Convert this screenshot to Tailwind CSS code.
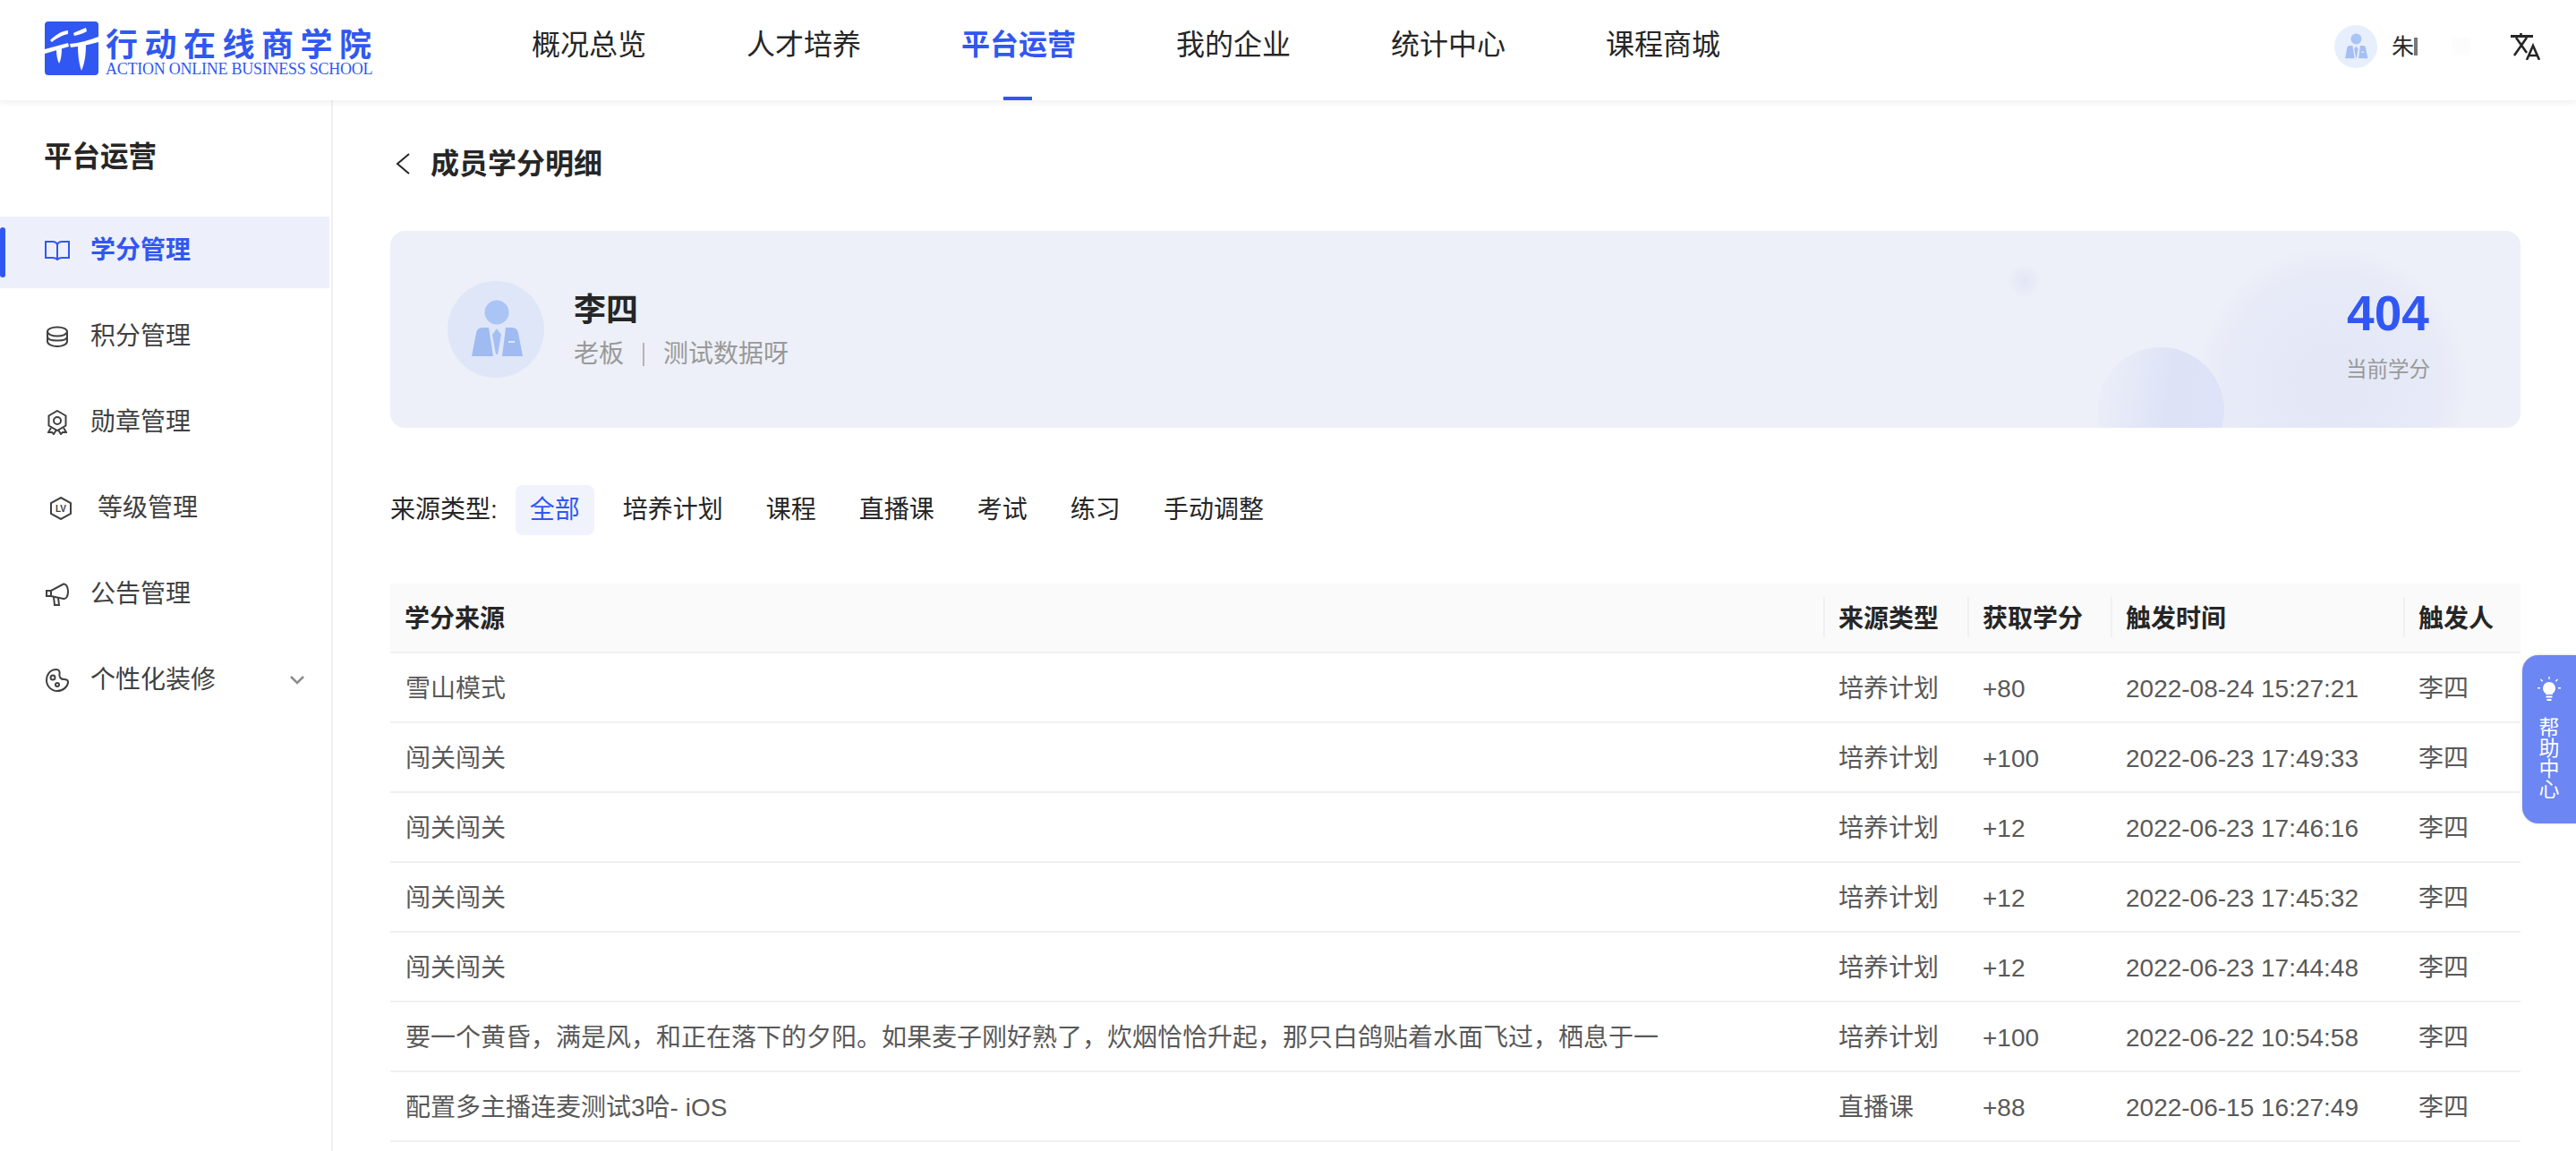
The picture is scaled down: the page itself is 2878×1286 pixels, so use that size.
<!DOCTYPE html>
<html lang="zh-CN">
<head>
<meta charset="UTF-8">
<title>成员学分明细</title>
<script src="https://cdn.jsdelivr.net/npm/@tailwindcss/browser@4"></script>
</head>
<body class="h-[1286px] overflow-hidden bg-white text-[#262626] [font-family:'Liberation_Sans','Noto_Sans_CJK_SC',sans-serif]">

<!-- header -->
<header class="relative z-10 flex h-[112px] items-center bg-white shadow-[0_2px_8px_rgba(0,0,0,0.07)]">
  <div class="mb-[4px] ml-[50px] flex w-[366px] shrink-0 items-center">
    <svg class="h-[60px] w-[60px] shrink-0" viewBox="0 0 60 60">
      <rect width="60" height="60" rx="4" fill="#3157f2"/>
      <path d="M6 21 C12 15 18 11 26 10 L26 14 C20 15 13 19 8 23 Z" fill="#fff"/>
      <path d="M0 31 L26 24 L27 28 L0 36 Z" fill="#fff"/>
      <path d="M13 32 L19 30 C19 37 18 43 16 47 C14 43 13 37 13 32 Z" fill="#fff"/>
      <path d="M32 13 C36 11 41 9 46 7 L47 11 C42 14 37 15 33 16 Z" fill="#fff"/>
      <path d="M28 25 C38 24 50 21 60 17 L60 23 C50 26 38 28 29 29 Z" fill="#fff"/>
      <path d="M37 27 L46 25 C46 35 45 46 41 55 C38 47 37 36 37 27 Z" fill="#fff"/>
    </svg>
    <div class="ml-[8px] flex flex-col pt-[8px]">
      <span class="h-[38px] whitespace-nowrap text-[36px] leading-[40px] font-bold tracking-[7.5px] text-[#3157f2]">行动在线商学院</span>
      <span class="whitespace-nowrap text-[18px] leading-[16px] tracking-[-0.25px] text-[#3157f2] [font-family:'Liberation_Serif',serif]">ACTION ONLINE BUSINESS SCHOOL</span>
    </div>
  </div>
  <nav class="ml-[178px] flex h-full items-center gap-[113px] pb-[12px] text-[32px] leading-[40px]">
    <a class="w-[127px] whitespace-nowrap">概况总览</a>
    <a class="w-[127px] whitespace-nowrap">人才培养</a>
    <a class="relative flex h-full w-[127px] items-center whitespace-nowrap font-semibold text-[#3157f2]">平台运营<span class="absolute bottom-[-12px] left-[47px] h-[4px] w-[32px] bg-[#3157f2]"></span></a>
    <a class="w-[127px] whitespace-nowrap">我的企业</a>
    <a class="w-[127px] whitespace-nowrap">统计中心</a>
    <a class="w-[127px] whitespace-nowrap">课程商城</a>
  </nav>
  <div class="ml-auto flex items-center pr-[40px] pb-[8px]">
    <svg class="h-[48px] w-[48px]" viewBox="0 0 108 108">
      <circle cx="54" cy="54" r="54" fill="#e8effc"/>
      <circle cx="55" cy="35" r="13.5" fill="#a9c4f5"/>
      <path d="M27 84 L32 58 Q33 52 39 52 L46 52 L51 84 Z M61 84 L65 52 L72 52 Q78 52 79 58 L84 84 Z" fill="#a5bff4"/>
      <path d="M55 53 L60 60 L56 82 L54 82 L50 60 Z" fill="#a5bff4"/>
      <rect x="68" y="67" width="7" height="2" fill="#fff"/>
    </svg>
    <span class="ml-[16px] text-[25px] leading-[32px]">朱</span>
    <span class="h-[20px] w-[4px] bg-[#777]"></span>
    <span class="ml-[39px] h-[20px] w-[20px] bg-[#fcfcfc]"></span>
    <svg class="ml-[45px] h-[30px] w-[33px]" viewBox="0 0 33 30" fill="none" stroke="#262626">
      <path stroke-width="3" d="M0 3.5H25"/>
      <path stroke-width="2.6" d="M11.5 0V3M6 5L18 22M18 5L4 25"/>
      <path stroke-width="2.6" d="M18 30L25 14L32 30M20 25H30"/>
    </svg>
  </div>
</header>

<div class="flex h-[1174px]">
  <!-- sidebar -->
  <aside class="w-[372px] shrink-0 border-r-2 border-[#f0f0f0]">
    <h2 class="mt-[43px] mb-[47px] pl-[49px] text-[31.5px] leading-[40px] font-semibold">平台运营</h2>
    <ul class="flex flex-col gap-[16px] text-[28px] leading-[36px] text-[#404040]">
      <li class="relative mr-[2px] flex h-[80px] items-center gap-[23px] bg-[#edf0fb] pb-1 pl-[50px] font-semibold text-[#3157f2]">
        <span class="absolute top-[12px] left-0 h-[56px] w-[6px] rounded-[3px] bg-[#3157f2]"></span>
        <svg class="h-[22px] w-[28px]" viewBox="0 0 28 22" fill="none" stroke="#3157f2" stroke-width="2"><path d="M14 4C13 2 11 1 9 1H1V19H9C11 19 13 20 14 21C15 20 17 19 19 19H27V1H19C17 1 15 2 14 4V21"/></svg>
        <span>学分管理</span>
      </li>
      <li class="flex h-[80px] items-center gap-[25px] pb-1 pl-[52px]">
        <svg class="h-[24px] w-[24px]" viewBox="0 0 24 24" fill="none" stroke="#404040" stroke-width="2"><ellipse cx="12" cy="6.5" rx="11" ry="5"/><path d="M1 6.5V12C1 15 6 16.5 12 16.5S23 15 23 12V6.5M1 12V17.5C1 20.5 6 23 12 23S23 20.5 23 17.5V12"/></svg>
        <span>积分管理</span>
      </li>
      <li class="flex h-[80px] items-center gap-[26px] pb-1 pl-[53px]">
        <svg class="h-[28px] w-[22px]" viewBox="0 0 22 28" fill="none" stroke="#404040" stroke-width="2"><path d="M11 1L20.5 6.5V17.5L11 23L1.5 17.5V6.5Z"/><circle cx="11" cy="12" r="4"/><path d="M4 20L1 25L5 25L7 27L9.5 23M18 20L21 25L17 25L15 27L12.5 23"/></svg>
        <span>勋章管理</span>
      </li>
      <li class="flex h-[80px] items-center gap-[29px] pb-1 pl-[56px]">
        <svg class="h-[26px] w-[24px]" viewBox="0 0 24 26" fill="none" stroke="#404040" stroke-width="2"><path d="M12 1L23 7V19L12 25L1 19V7Z"/><text x="12" y="17" text-anchor="middle" font-size="10" font-weight="700" fill="#404040" stroke="none" font-family="Liberation Sans">LV</text></svg>
        <span>等级管理</span>
      </li>
      <li class="flex h-[80px] items-center gap-[24px] pb-1 pl-[51px]">
        <svg class="h-[26px] w-[26px]" viewBox="0 0 26 26" fill="none" stroke="#404040" stroke-width="2"><path d="M1 9H6L20 1.5C23 1 25 5 25 10C25 15 23 18.5 20 18L6 15H1Z"/><path d="M6 9V15M9 16L10 25H15L14 17"/></svg>
        <span>公告管理</span>
      </li>
      <li class="flex h-[80px] items-center pb-1 pl-[51px]">
        <svg class="h-[26px] w-[26px]" viewBox="0 0 26 26" fill="none" stroke="#404040" stroke-width="2"><path d="M12 1C5 1 1 6.500 1 13C1 20 6.500 25 13 25C19.500 25 25 20 25 15C25 13 23 12 20.500 12C17 12 15 10 15.500 6C16 3 14.500 1 12 1Z"/><circle cx="8" cy="10" r="2.500"/><circle cx="13" cy="18" r="2"/></svg>
        <span class="ml-[24px] flex-1">个性化装修</span>
        <svg class="mr-[30px] h-[10px] w-[16px]" viewBox="0 0 16 10" fill="none" stroke="#8c8c8c" stroke-width="2.5"><path d="M1 1L8 8L15 1"/></svg>
      </li>
    </ul>
  </aside>

  <!-- main content -->
  <main class="min-w-0 flex-1 pr-[62px] pl-[64px]">
    <div class="mt-[51px] mb-[55px] flex h-[40px] items-center">
      <svg class="ml-[5px] h-[24px] w-[18px]" viewBox="0 0 18 24" fill="none" stroke="#262626" stroke-width="2"><path d="M16 1L3 12L16 23"/></svg>
      <h1 class="ml-[22px] text-[32px] leading-[40px] font-semibold">成员学分明细</h1>
    </div>

    <!-- member card -->
    <section class="relative flex h-[220px] items-center overflow-hidden rounded-[16px] bg-[#edf0f8]">
      <span class="absolute top-[37px] left-[1807px] h-[38px] w-[38px] rounded-full bg-[radial-gradient(closest-side,#e3e6f6,transparent)]"></span>
      <span class="absolute top-[15px] left-[2016px] h-[308px] w-[308px] rounded-full bg-[radial-gradient(closest-side,#e3e7f6,#e7eaf7_75%,transparent)]"></span>
      <span class="absolute top-[130px] left-[1907px] h-[142px] w-[142px] rounded-full bg-[linear-gradient(100deg,transparent,#dde2f7_55%,#dde3f8)]"></span>

      <svg class="relative ml-[64px] h-[108px] w-[108px] shrink-0" viewBox="0 0 108 108">
        <circle cx="54" cy="54" r="54" fill="#dfe6f8"/>
        <circle cx="55" cy="35" r="13.5" fill="#a9c4f5"/>
        <path d="M27 84 L32 58 Q33 52 39 52 L46 52 L51 84 Z M61 84 L65 52 L72 52 Q78 52 79 58 L84 84 Z" fill="#a0baf2"/>
        <path d="M55 53 L60 60 L56 82 L54 82 L50 60 Z" fill="#a5bff4"/>
        <rect x="68" y="67" width="7" height="2" fill="#dfe6f8"/>
      </svg>
      <div class="relative ml-[33px] pt-[3px]">
        <div class="text-[36px] leading-[44px] font-bold">李四</div>
        <div class="mt-[9px] flex items-center text-[28px] leading-[36px] text-[#999]">
          <span>老板</span>
          <span class="mx-[21px] h-[26px] w-[2px] bg-[#b5b5b5]"></span>
          <span>测试数据呀</span>
        </div>
      </div>
      <div class="relative mr-[101px] ml-auto flex flex-col items-center pt-[11px]">
        <span class="text-[55px] leading-[60px] font-bold text-[#3157f2]">404</span>
        <span class="mt-[18px] text-[23.5px] leading-[30px] text-[#999]">当前学分</span>
      </div>
    </section>

    <!-- source type filter -->
    <div class="mt-[64px] flex items-center gap-[16px] text-[28px] leading-[36px]">
      <span class="mr-[4px] whitespace-nowrap">来源类型:</span>
      <span class="flex h-[56px] items-center rounded-[8px] bg-[#f0f3fc] px-[16px] text-[#3157f2]">全部</span>
      <span class="px-[16px]">培养计划</span>
      <span class="px-[16px]">课程</span>
      <span class="px-[16px]">直播课</span>
      <span class="px-[16px]">考试</span>
      <span class="px-[16px]">练习</span>
      <span class="px-[16px]">手动调整</span>
    </div>

    <!-- credit table -->
    <table class="mt-[54px] w-full table-fixed border-separate border-spacing-0 text-left text-[28px] leading-[36px]">
      <colgroup>
        <col>
        <col class="w-[161px]">
        <col class="w-[160px]">
        <col class="w-[327px]">
        <col class="w-[131px]">
      </colgroup>
      <thead>
        <tr class="h-[78px] bg-[#fafafa] font-semibold">
          <th class="border-b-2 border-[#f0f0f0] px-[16px] pt-[3px] font-semibold">学分来源</th>
          <th class="relative border-b-2 border-[#f0f0f0] px-[17px] pt-[3px] font-semibold before:absolute before:top-[15px] before:left-0 before:h-[45px] before:w-[2px] before:bg-[#f0f0f0]">来源类型</th>
          <th class="relative border-b-2 border-[#f0f0f0] px-[17px] pt-[3px] font-semibold before:absolute before:top-[15px] before:left-0 before:h-[45px] before:w-[2px] before:bg-[#f0f0f0]">获取学分</th>
          <th class="relative border-b-2 border-[#f0f0f0] px-[17px] pt-[3px] font-semibold before:absolute before:top-[15px] before:left-0 before:h-[45px] before:w-[2px] before:bg-[#f0f0f0]">触发时间</th>
          <th class="relative border-b-2 border-[#f0f0f0] px-[17px] pt-[3px] font-semibold before:absolute before:top-[15px] before:left-0 before:h-[45px] before:w-[2px] before:bg-[#f0f0f0]">触发人</th>
        </tr>
      </thead>
      <tbody class="text-[#595959] [&_td]:border-b-2 [&_td]:border-[#f0f0f0] [&_td]:px-[17px] [&_td]:pt-[3px] [&_tr]:h-[78px]">
        <tr><td>雪山模式</td><td>培养计划</td><td>+80</td><td>2022-08-24 15:27:21</td><td>李四</td></tr>
        <tr><td>闯关闯关</td><td>培养计划</td><td>+100</td><td>2022-06-23 17:49:33</td><td>李四</td></tr>
        <tr><td>闯关闯关</td><td>培养计划</td><td>+12</td><td>2022-06-23 17:46:16</td><td>李四</td></tr>
        <tr><td>闯关闯关</td><td>培养计划</td><td>+12</td><td>2022-06-23 17:45:32</td><td>李四</td></tr>
        <tr><td>闯关闯关</td><td>培养计划</td><td>+12</td><td>2022-06-23 17:44:48</td><td>李四</td></tr>
        <tr><td>要一个黄昏，满是风，和正在落下的夕阳。如果麦子刚好熟了，炊烟恰恰升起，那只白鸽贴着水面飞过，栖息于一</td><td>培养计划</td><td>+100</td><td>2022-06-22 10:54:58</td><td>李四</td></tr>
        <tr><td>配置多主播连麦测试3哈- iOS</td><td>直播课</td><td>+88</td><td>2022-06-15 16:27:49</td><td>李四</td></tr>
      </tbody>
    </table>
  </main>
</div>

<!-- help tab -->
<div class="absolute top-[732px] right-0 z-20 flex h-[188px] w-[60px] flex-col items-center rounded-l-[18px] bg-[#6c86f3] pt-[24px] text-white shadow-[0_0_3px_rgba(0,0,0,0.2)]">
  <svg class="h-[28px] w-[26px]" viewBox="0 0 26 28" fill="#fff">
    <path d="M13 6a7 7 0 0 0-4 12.700V20h8v-1.300A7 7 0 0 0 13 6Z"/>
    <rect x="9.500" y="21.500" width="7" height="2"/><rect x="10.500" y="25" width="5" height="2"/>
    <path d="M12.300 0h1.400v3h-1.400ZM3 3.500l1-1 2.200 2.200-1 1ZM23 3.500l-1-1-2.200 2.200 1 1ZM0 12h3v1.400H0ZM23 12h3v1.400h-3Z"/>
  </svg>
  <span class="mt-[18px] w-[23px] text-center text-[23px] leading-[23px]">帮助中心</span>
</div>

</body>
</html>
